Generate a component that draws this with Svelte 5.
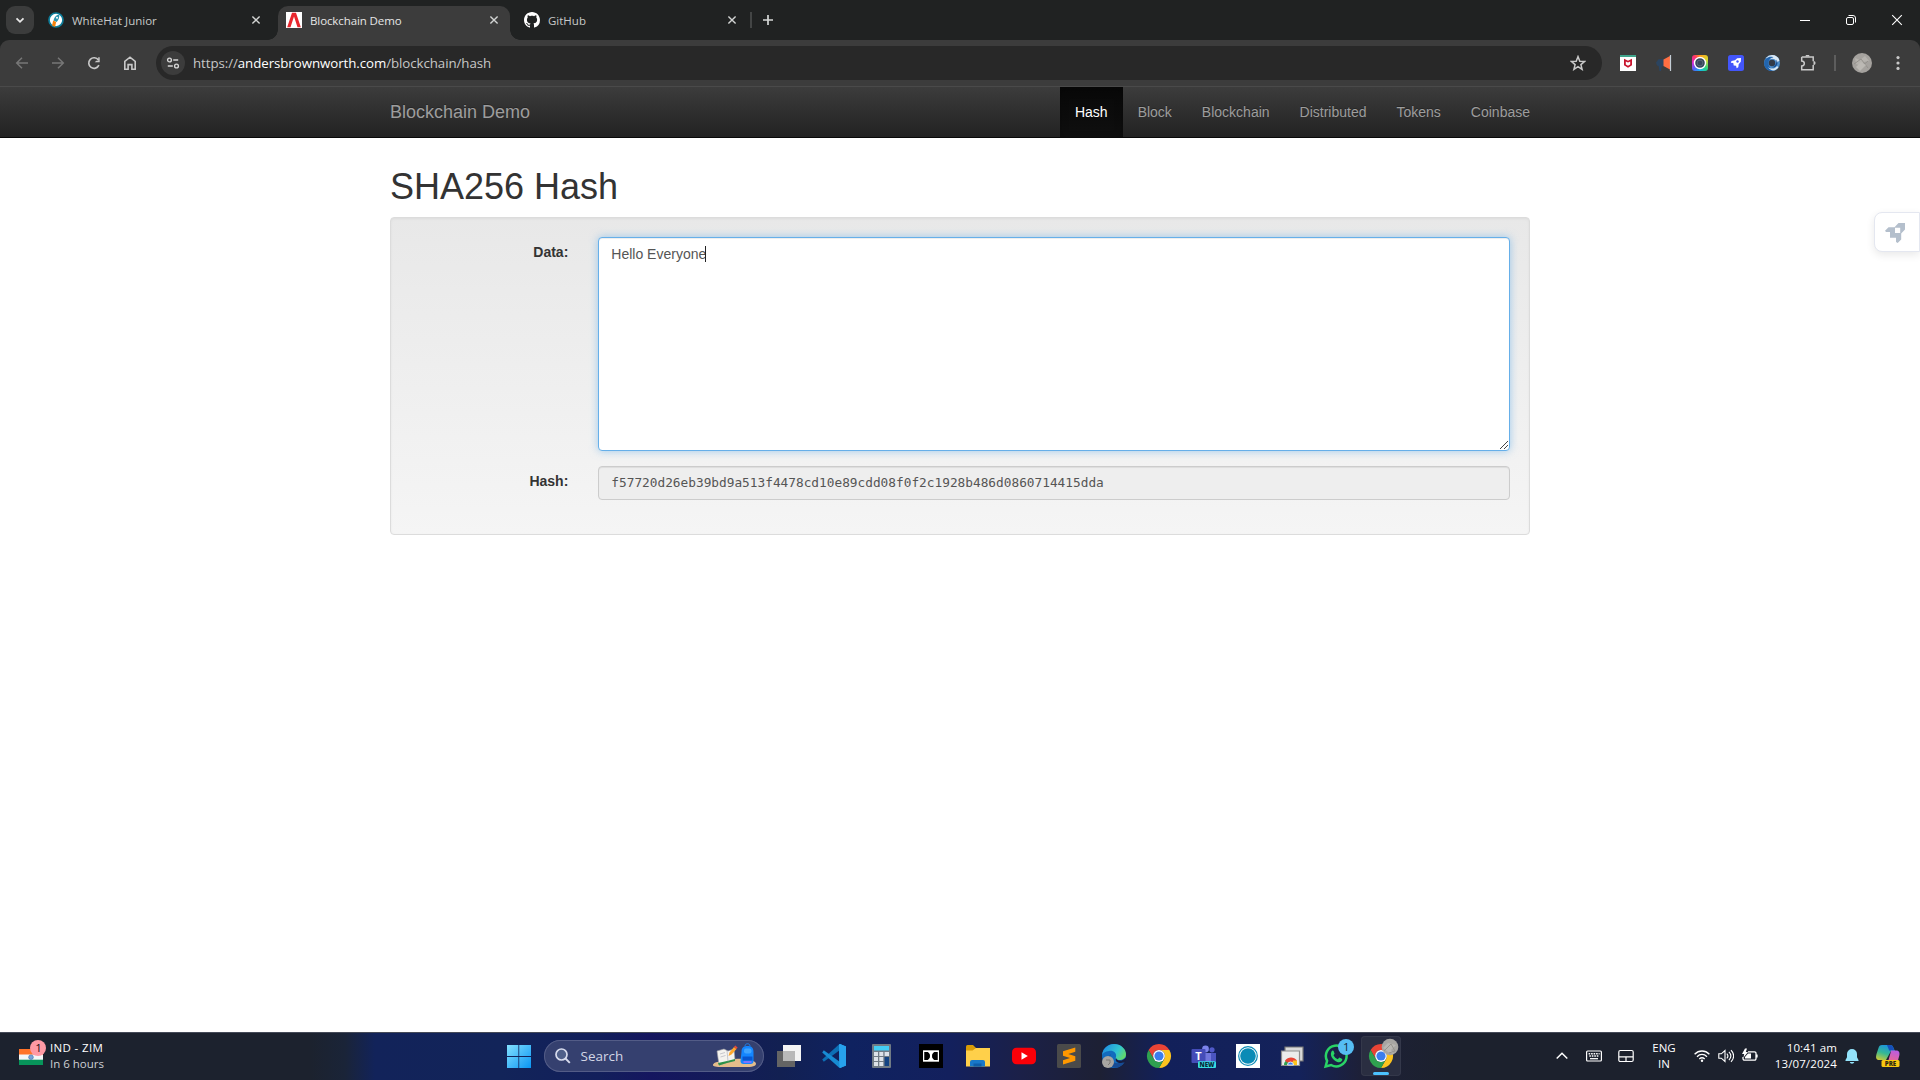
<script>
  let data = $state('Hello Everyone');
  const hash = 'f57720d26eb39bd9a513f4478cd10e89cdd08f0f2c1928b486d0860714415dda';
  const links = ['Hash', 'Block', 'Blockchain', 'Distributed', 'Tokens', 'Coinbase'];
</script>

{#snippet closeIcon()}
  <svg class="i16" viewBox="0 0 16 16"><path d="M4.4 4.4l7.2 7.2M11.6 4.4l-7.2 7.2" stroke="#d2d4d3" stroke-width="1.4" /></svg>
{/snippet}

{#snippet chromeLogo()}
  <path d="M5.6 10A12 12 0 0 1 26.4 10L16 10A6 6 0 0 0 10.8 19Z" fill="#e94435" />
  <path d="M26.4 10A12 12 0 0 1 16 28L21.2 19A6 6 0 0 0 16 10Z" fill="#fcc31e" />
  <path d="M16 28A12 12 0 0 1 5.6 10L10.8 19A6 6 0 0 0 21.2 19Z" fill="#2fa14f" />
  <circle cx="16" cy="16" r="5.9" fill="#fff" />
  <circle cx="16" cy="16" r="4.6" fill="#3b7ded" />
{/snippet}

<div class="screen">
  <header class="tabs">
    <button class="drop" aria-label="Search tabs"><svg class="i16" viewBox="0 0 16 16"><path d="M4.5 6.3L8 9.8l3.500-3.500" stroke="#e8e8e8" stroke-width="1.8" fill="none" /></svg></button>
    <div class="tab">
      <svg class="i16" viewBox="0 0 16 16"><circle cx="8" cy="8" r="7" fill="#fff" stroke="#0d7c99" stroke-width="1.700" /><path d="M11.300 2.500C7.500 3 6 6 5.600 8.600l3 1.400c1.800-1.700 3-4.400 2.700-7.500z" fill="#2b93ad" /><circle cx="9" cy="5.800" r="1" fill="#fff" /><path d="M5.200 8.600l3 1.500L7 15l-3-1.500z" fill="#f7820b" /></svg>
      <span class="title">WhiteHat Junior</span>{@render closeIcon()}
    </div>
    <div class="tab active">
      <svg class="i16" viewBox="0 0 16 16"><path fill="#fff" d="M0 0h16v16H0z" /><path d="M1.200 15.200L6 .7h4l4.800 14.500h-3.300L8 4.500 4.500 15.200z" fill="#e8262d" /></svg>
      <span class="title">Blockchain Demo</span>{@render closeIcon()}
    </div>
    <div class="tab">
      <svg class="i16" viewBox="0 0 16 16"><path fill="#fff" d="M8 0C3.580 0 0 3.580 0 8c0 3.540 2.290 6.530 5.470 7.590.4.070.55-.170.55-.380 0-.190-.010-.820-.010-1.490-2.010.370-2.530-.490-2.690-.940-.090-.230-.480-.940-.820-1.130-.280-.150-.680-.520-.010-.530.630-.010 1.080.580 1.230.820.720 1.210 1.870.870 2.330.660.070-.520.280-.870.510-1.070-1.780-.200-3.640-.890-3.640-3.950 0-.870.310-1.590.820-2.150-.080-.200-.360-1.020.080-2.120 0 0 .670-.210 2.200.820.640-.180 1.320-.270 2-.270s1.360.090 2 .270c1.530-1.040 2.200-.820 2.200-.820.440 1.100.160 1.920.080 2.120.510.560.820 1.270.820 2.150 0 3.070-1.870 3.750-3.650 3.950.290.250.540.730.540 1.480 0 1.070-.010 1.930-.010 2.200 0 .210.150.460.550.380A8.010 8.010 0 0 0 16 8c0-4.420-3.580-8-8-8z" /></svg>
      <span class="title">GitHub</span>{@render closeIcon()}
    </div>
    <i class="tabsep"></i>
    <svg class="i16 plus" viewBox="0 0 16 16"><path d="M8 3v10M3 8h10" stroke="#d5d7d6" stroke-width="1.700" /></svg>
    <div class="winbtns">
      <svg class="i16" viewBox="0 0 16 16"><path d="M3 8.500h10" stroke="#fff" /></svg>
      <svg class="i16" viewBox="0 0 16 16"><rect x="3.500" y="5.500" width="7" height="7" rx="1.500" stroke="#fff" fill="none" /><path d="M5.500 3.500h4.500a2.500 2.500 0 0 1 2.500 2.500v4.500" stroke="#fff" fill="none" /></svg>
      <svg class="i16" viewBox="0 0 16 16"><path d="M3.200 3.200l9.600 9.600M12.800 3.200l-9.600 9.600" stroke="#fff" stroke-width="1.100" /></svg>
    </div>
  </header>

  <div class="toolwrap">
    <div class="toolbar">
      <div class="nav-ic"><svg class="i16" viewBox="0 0 16 16"><path d="M14 8H3M8 2.700L2.700 8 8 13.300" stroke="#777" stroke-width="1.500" fill="none" /></svg></div>
      <div class="nav-ic"><svg class="i16" viewBox="0 0 16 16"><path d="M2 8h11M8 2.700L13.300 8 8 13.300" stroke="#777" stroke-width="1.500" fill="none" /></svg></div>
      <div class="nav-ic"><svg class="i16" viewBox="0 0 16 16"><path d="M12.900 10.200A5.300 5.300 0 1 1 12.400 5" stroke="#c9c9c9" stroke-width="1.600" fill="none" /><path d="M13.700 2.200v5H8.700l1.600-1.500h1.900V2.200z" fill="#c9c9c9" /></svg></div>
      <div class="nav-ic"><svg class="i16" viewBox="0 0 16 16"><path d="M2.800 14.200V6.300L8 2.200l5.200 4.100v7.900H9.900V9.600H6.100v4.600z" stroke="#c9c9c9" stroke-width="1.600" fill="none" /></svg></div>
      <div class="omni">
        <span class="site"><svg class="i16" viewBox="0 0 16 16"><path d="M8.200 5h5M2.800 11h5" stroke="#d6d6d6" stroke-width="1.700" /><circle cx="4.500" cy="5" r="1.900" stroke="#d6d6d6" stroke-width="1.400" fill="none" /><circle cx="11.500" cy="11" r="1.900" stroke="#d6d6d6" stroke-width="1.400" fill="none" /></svg></span>
        <span class="url">https://<b>andersbrownworth.com</b>/blockchain/hash</span>
        <svg class="i16" viewBox="0 0 16 16"><path d="M8 1.600l1.800 4.600 4.800.3-3.700 3.100 1.200 4.800L8 11.700l-4.100 2.700 1.200-4.800L1.400 6.500l4.800-.3z" stroke="#c9c9c9" stroke-width="1.500" fill="none" /></svg>
      </div>
      <div class="exts">
        <svg class="i16" viewBox="0 0 16 16"><path fill="#fff" d="M0 0h16v16H0z" /><path fill="#40a58c" d="M0 0h16v2H0z" /><path d="M4 3.800l4 2 4-2v6.400l-4 2.600-4-2.600zM5.800 6.500v3L8 10.800l2.200-1.300v-3L8 7.600z" fill="#c8142d" fill-rule="evenodd" /></svg>
        <svg class="i16" viewBox="0 0 16 16"><path d="M0 7.500L2.500 4.300 8 4v7.500l-2-.2L5 16H3.500L2.600 11 1 10.500z" fill="#2b4460" /><path d="M7.500 4.400L14 1v13.500l-6.500-3.400z" fill="#ff6e42" /><path d="M14.500 0v16" stroke="#c3cdd5" stroke-width="1.200" /></svg>
        <span class="rainbow"><svg class="i16" viewBox="0 0 16 16"><circle cx="8" cy="8" r="5.500" fill="#35475a" stroke="#fff" stroke-width="1.400" /><circle cx="8" cy="8" r="2.900" fill="none" stroke="#627082" stroke-width=".8" /></svg></span>
        <svg class="i16" viewBox="0 0 16 16"><rect width="16" height="16" rx="2.500" fill="#4356fb" /><path d="M13 3L9.200 3.300 7 5.200 3.500 5.900 2.800 7.700 5.300 8.100 5.700 10.500 8.100 10.800 8.600 13.300 10.300 12.200 10.700 9.200 12.800 6.800z" fill="#fff" /><circle cx="9.500" cy="6.500" r="1.200" fill="#4356fb" /></svg>
        <svg class="i16" viewBox="0 0 16 16"><circle cx="8" cy="8" r="8" fill="#4d8cc9" /><path d="M8 0a8 8 0 0 1 7.500 5.500L12.500 8A4.500 4.500 0 0 0 8 3.800L4 4.500 2 3A8 8 0 0 1 8 0z" fill="#dbe9f5" /><path d="M.1 8.500C1 3 4.500 1 9.500 2.200 6 3 4.300 5 4.500 8.700 4.600 12 7 14 10 15.600 4 17 .5 13.500.1 8.500z" fill="#2265ae" /><path d="M4 12c3 2.500 7 2 9-1l1.500 1.200C12 16 7 17 4 12z" fill="#dbe9f5" /><circle cx="8" cy="8" r="3.200" fill="#333a48" /><path d="M12.500 4.500C12.500 9 11 11 8 12.500c4.500.5 7-3.500 4.500-8z" fill="#1b4e91" /></svg>
        <svg class="i16" viewBox="0 0 16 16"><path d="M1.700 1.900h11.500v4.300M13.200 10v4.800H1.700v-3.900c3.500-.2 3.500-4.600 0-4.800V1.900" stroke="#c9c9c9" stroke-width="1.500" fill="none" /><path d="M5.500 1.500a2 2 0 0 1 4 0zM13.500 6v4.200a2.100 2.100 0 0 0 0-4.200z" fill="#c9c9c9" /></svg>
      </div>
      <i class="toolsep"></i>
      <svg class="avatar" viewBox="0 0 20 20"><circle cx="10" cy="10" r="10" fill="#a5a29e" /><path d="M3 5l5 2 5-4 4 5-5 1-3 4-5-2z" fill="#b6b3ae" /><path d="M2 11l7-5 7 9M8 15l8-7" stroke="#95928d" fill="none" /><path d="M4 14l5-5 5 3-6 6z" fill="#bcb9b4" /></svg>
      <svg class="i16" viewBox="0 0 16 16" fill="#c9c9c9"><circle cx="8" cy="2.600" r="1.600" /><circle cx="8" cy="8" r="1.600" /><circle cx="8" cy="13.400" r="1.600" /></svg>
    </div>
  </div>

  <nav class="navbar">
    <div class="container navrow">
      <span class="brand">Blockchain Demo</span>
      <div class="links">
        {#each links as link, i}<span class="link" class:current={i === 0}>{link}</span>{/each}
      </div>
    </div>
  </nav>

  <main class="container page">
    <h1>SHA256 Hash</h1>
    <div class="well">
      <div class="group">
        <span class="label">Data:</span>
        <div class="control area"><span>{data}</span><i class="caret"></i>
          <svg class="grip" viewBox="0 0 9 9"><path d="M1 9L9 1M5 9L9 5" stroke="#444" /></svg>
        </div>
      </div>
      <div class="group">
        <span class="label">Hash:</span>
        <div class="control readonly">{hash}</div>
      </div>
    </div>
  </main>

  <aside class="float">
    <svg class="rocket" viewBox="0 0 20 20"><path d="M20 0H13.500L9.500 4.200H3.500L0 7.700 1 9H5V14.800H11V19L12.700 20 16.200 16.500V10.500L20 6.500zM10 4.700h5.200V10H10z" fill="#b4bfcc" fill-rule="evenodd" /></svg>
  </aside>

  <footer class="taskbar">
    <div class="widget">
      <svg class="flag" viewBox="0 0 28 28"><path fill="#ff7328" d="M0 9h24v6H0z" /><path fill="#f3f5f7" d="M0 14.500h24v6H0z" /><path fill="#07945a" d="M0 19.700h24V25H0z" /><circle cx="12" cy="17.200" r="2.300" fill="#78a4d4" stroke="#4774b4" stroke-width=".7" /><circle cx="19" cy="8" r="8" fill="#ff99a4" /><text x="19.500" y="12" text-anchor="middle" font-size="11.500" fill="#201014">1</text></svg>
      <div class="match"><div class="teams">IND - ZIM</div><div class="dim">In 6 hours</div></div>
    </div>

    <svg class="i32 start" viewBox="0 0 32 32"><defs><linearGradient id="win" x1="4" y1="4" x2="28" y2="28" gradientUnits="userSpaceOnUse"><stop stop-color="#85e2ff" /><stop offset="1" stop-color="#0a95f3" /></linearGradient></defs><path d="M4 5h11.400v11H4zM16.200 5H28v11H16.200zM4 17h11.400v11H4zM16.200 17H28v11H16.200z" fill="url(#win)" /></svg>

    <div class="search">
      <svg class="mag" viewBox="0 0 18 18"><circle cx="7.500" cy="7.500" r="5.500" stroke="#d8dced" stroke-width="1.700" fill="#50608a" /><path d="M11.500 11.500l4.300 4.300" stroke="#d8dced" stroke-width="1.900" /></svg>
      <span>Search</span>
      <svg class="school" viewBox="0 0 46 26"><path d="M1 21.500C4 17 12 19 18 17s20-2 25 2c3 3-1 5-8 5H10c-5 0-10-.3-9-2.500z" fill="#e4bd8b" /><path d="M5 8l7-2 4 2 6-2 1 11-7 2-9 3z" fill="#f4f3ef" stroke="#9b9aa0" stroke-width=".6" /><path d="M6 20l9-2 8-2v2l-8 2-8 2.500z" fill="#2c9148" /><path d="M15 7.500l1 11M8 11l5-1.500M8.500 14l5-1.500M18 10l4-1.300" stroke="#a7a7b3" stroke-width=".6" /><path d="M16.500 13l1-3.500 4.500-5.500 2.500 2-5 5.500z" fill="#ffa72d" /><path d="M22 4l1.300-1.500 2.300 2L24.500 6z" fill="#e94a37" /><path d="M29.500 9c0-5 2.500-6 6-6s6 1 6 6v9c0 2-1 3-3 3h-7c-2 0-3-1-3-3z" fill="#1486ff" /><path d="M33 3c0-3 5-3 5 0" stroke="#2283ea" fill="none" /><rect x="32" y="5.500" width="7.500" height="5" rx="2" fill="#40a4ff" /><path d="M30.500 13.500h10v4h-10z" fill="#0756d0" /><path d="M31.500 19h8" stroke="#9c6cff" stroke-width="1.500" /></svg>
    </div>

    <div class="apps">
      <svg class="i32" viewBox="0 0 32 32"><path fill="#646464" d="M4 11h18v16H4z" /><path fill="#f4f4f4" d="M10 5h18v16H10z" /><path fill="#b9b9b9" d="M10 11h12v10H10z" /></svg>
      <svg class="i32" viewBox="0 0 32 32"><path d="M22 4l6 2.500v19L22 28 21 4.600z" fill="#26a5f2" /><path d="M21.500 4L4.200 19.500l1.600 2.200L22 10z" fill="#0d6fb5" /><path d="M21.500 28L4.200 12.500l1.600-2.200L22 22z" fill="#178bd3" /><path d="M21 4.500L22 4l6 2.500v19L22 28l-.8-.6z" fill="#27a2ed" /></svg>
      <svg class="i32" viewBox="0 0 32 32"><rect x="6" y="4" width="19" height="24" rx="1" fill="#707b85" /><path fill="#43cdf5" d="M8 6h15v4.500H8z" /><path fill="#dde3e9" d="M8 12h4v4H8zM13.300 12h4v4h-4zM18.600 12h4.400v4h-4.400zM8 17h4v4H8zM13.300 17h4v4h-4zM8 22h4v4H8zM13.300 22h4v4h-4z" /><path fill="#124383" d="M18.600 17H23v9h-4.400z" /></svg>
      <svg class="i32" viewBox="0 0 32 32"><path fill="#000" d="M4 4h24v24H4z" /><path fill="#fff" d="M8 10.300h16v11.400H8z" /><path fill="#000" d="M9.500 12h13v8h-13z" /><path fill="#fff" d="M10.600 12.400h.9v7.200h-.9zM20.500 12.400h.9v7.200h-.9zM12.500 12h7a4.600 4.600 0 0 0 0 8h-7a4.600 4.600 0 0 0 0-8z" /><path fill="#000" d="M9.500 12H12a4 4 0 0 1 2.800 4A4 4 0 0 1 12 20H9.500zM22.500 12H20a4 4 0 0 0-2.800 4 4 4 0 0 0 2.800 4h2.500z" /></svg>
      <svg class="i32" viewBox="0 0 32 32"><path d="M4 6.500Q4 5 5.500 5H11l3 3v5H4z" fill="#d89b06" /><path d="M4 10.500h6.500L14 8h14v18.500H4z" fill="#ffd04a" /><path d="M8 26.500V22q0-2 2-2h11q2 0 2 2v4.500z" fill="#1878c9" /><path d="M11.500 23.500h8v3h-8z" fill="#0e5da8" /></svg>
      <svg class="i32" viewBox="0 0 32 32"><rect x="4" y="7.800" width="24" height="16.400" rx="4.500" fill="#fa0008" /><path d="M13.500 12.300l6.300 3.700-6.300 3.700z" fill="#fff" /></svg>
      <svg class="i32" viewBox="0 0 32 32"><rect x="4" y="4" width="24" height="24" rx="1.500" fill="#4a4a4a" /><path d="M22.300 7.500L10 11.300v4.400l7 2.200-7 2.300v4.300l12.300-3.800v-4.400l-7-2.200 7-2.300z" fill="#ff9800" /></svg>
      <svg class="i32" viewBox="0 0 32 32"><defs><linearGradient id="edge" x1="8" y1="6" x2="27" y2="18" gradientUnits="userSpaceOnUse"><stop stop-color="#2295df" /><stop offset=".55" stop-color="#31c4d2" /><stop offset="1" stop-color="#6ade58" /></linearGradient></defs><circle cx="16" cy="16" r="12" fill="#126bbd" /><path d="M4 15C5 8 10 4 16 4c7 0 12 5 12 10 0 4-3 6-7 6-3 0-4-1-3-3 1-4-3-7-7-6-4 .5-6 2-7 4z" fill="url(#edge)" /><path d="M13 14c-3 5 2 10 8 9 3 0 4-1 6-2-4 8-12 8-16 4-2-3-1-9 2-11z" fill="#174b94" /><path d="M18 18c2 4 7 3 10-.5V22l-5 1c-4 0-6-2-5-5z" fill="#171d41" /><circle cx="10" cy="22" r="6" fill="#a7a5a2" /><path d="M8 20h4v3l-2 2" fill="none" stroke="#797673" /></svg>
      <svg class="i32" viewBox="0 0 32 32">{@render chromeLogo()}</svg>
      <svg class="i32" viewBox="0 0 32 32"><circle cx="17.500" cy="9" r="3.400" fill="#7b83eb" /><circle cx="24" cy="9.800" r="2.600" fill="#5059c9" /><path d="M20 13h8v8l-4 3h-4z" fill="#4a55c0" /><path d="M11 13h12v9c-3 5-9 5-12 1z" fill="#7177dc" /><rect x="3.500" y="9" width="14" height="14" rx="1" fill="#444cb8" /><text x="10.500" y="20" text-anchor="middle" font-size="11" font-weight="700" fill="#fff">T</text><rect x="10" y="21.300" width="18" height="6.700" rx="1" fill="#37dce1" /><text x="19" y="26.800" text-anchor="middle" font-size="6.200" font-weight="800" fill="#082838">NEW</text></svg>
      <svg class="i32" viewBox="0 0 32 32"><path fill="#fff" d="M4 4h24v24H4z" /><circle cx="16" cy="16" r="9.300" fill="none" stroke="#0b8bb6" stroke-width="1.200" /><circle cx="16" cy="16" r="7.800" fill="#0b8bb6" /></svg>
      <svg class="i32" viewBox="0 0 32 32"><path fill="#d9d9d9" stroke="#777" stroke-width="1.200" d="M9 7h18v14H9z" /><path fill="#ececec" stroke="#8e8e8e" stroke-width="1.200" d="M5.500 11h18v14.500h-18z" /><path d="M8 25a6.500 6.500 0 0 1 13 0z" fill="#2fa14f" /><path d="M9 20.500c3-4 9-4 12 0l-2 2h-8z" fill="#e94435" /><path d="M17 20.500h4V25h-5z" fill="#fcc31e" /><path d="M11.500 25a3 3 0 0 1 6 0z" fill="#3b7ded" stroke="#fff" stroke-width=".8" /></svg>
      <svg class="i32" viewBox="0 0 32 32"><path d="M5.600 26.500l1.500-5.600a10.400 10.400 0 1 1 4 4.100z" fill="none" stroke="#29d366" stroke-width="2.500" /><path d="M11.500 11.500c1-1.500 2-1 2.500.5l.6 1.700-1.100 1.600c1 2 2.300 3.200 4.300 4l1.500-1.700 3 1.500c.3 2.500-2.500 3.800-5 2.800-4-1.500-8-6-5.800-10.400z" fill="#29d366" /><circle cx="26" cy="7" r="8" fill="#56bdf3" /><text x="26.300" y="11.200" text-anchor="middle" font-size="11.500" fill="#12263a">1</text></svg>
      <div class="live">
        <svg class="i32" viewBox="0 0 32 32">{@render chromeLogo()}<circle cx="25" cy="7" r="8.300" fill="#a7a5a2" /><path d="M18 8l5-5 8 2-5 5 3 4-6-2z" fill="#b8b6b2" /><path d="M19 11l7-7 4 7-6 2" fill="none" stroke="#95928d" /></svg>
        <i class="run"></i>
      </div>
    </div>

    <div class="tray">
      <svg class="i16" viewBox="0 0 16 16"><path d="M2.700 10.500L8 5.300l5.300 5.200" stroke="#fff" stroke-width="1.500" fill="none" /></svg>
      <svg class="i16 kb" viewBox="0 0 16 16"><rect x=".6" y="3" width="14.800" height="10" rx="1" stroke="#fff" stroke-width="1.200" fill="none" /><path d="M2.600 5.700h11M3.300 8h10" stroke="#fff" stroke-width="1.400" stroke-dasharray="1.600 .9" /><path d="M4 10.700h8" stroke="#fff" stroke-width="1.300" /></svg>
      <svg class="i16 pad" viewBox="0 0 16 16"><rect x=".8" y="2.500" width="14.400" height="11" rx="1.500" stroke="#fff" stroke-width="1.200" fill="none" /><path d="M1 8.800h14M8 8.800v4.500" stroke="#fff" stroke-width="1.200" /></svg>
      <div class="lang"><div>ENG</div><div>IN</div></div>
      <svg class="i16 wifi" viewBox="0 0 16 16"><path d="M.6 6.200c4.300-4.300 10.500-4.300 14.800 0M3 8.700c3-3 7-3 10 0M5.300 11c1.700-1.600 3.700-1.600 5.400 0" stroke="#fff" stroke-width="1.300" fill="none" /><circle cx="8" cy="12.700" r="1.200" fill="#fff" /></svg>
      <svg class="i16 vol" viewBox="0 0 16 16"><path d="M.8 5.800h2.500L7 2.500v11l-3.700-3.300H.8z" stroke="#fff" stroke-width="1.100" fill="none" /><path d="M8.800 5.600c1.400 1.500 1.400 3.300 0 4.800M10.900 3.900c2.400 2.500 2.400 5.700 0 8.200M13 2.200c3.300 3.600 3.300 8 0 11.600" stroke="#fff" stroke-width="1.100" fill="none" /></svg>
      <svg class="i16 batt" viewBox="0 0 16 16"><path d="M6 3.800h6.500a1.500 1.500 0 0 1 1.500 1.500v5.400a1.500 1.500 0 0 1-1.500 1.500h-10A1.500 1.500 0 0 1 1 10.700V9M15 6.500v3" stroke="#fff" stroke-width="1.300" fill="none" /><path d="M3 .5L0 6h2.200L1.500 9.500 6 4H3.800L5 .5zM6 5.500h3v5H3V9z" fill="#fff" /></svg>
      <div class="clock"><div>10:41 am</div><div>13/07/2024</div></div>
      <svg class="i16 bell" viewBox="0 0 16 16"><path d="M8 1a5 5 0 0 0-5 5v3.200L1.500 12v1h13v-1L13 9.200V6a5 5 0 0 0-5-5zM5.700 14a2.400 2.400 0 0 0 4.600 0z" fill="#93e3fb" /></svg>
      <svg class="copilot" viewBox="0 0 26 26"><defs><linearGradient id="cl" x1="10" y1="0" x2="4" y2="19" gradientUnits="userSpaceOnUse"><stop stop-color="#178ce9" /><stop offset=".5" stop-color="#35b895" /><stop offset="1" stop-color="#f0cf21" /></linearGradient><linearGradient id="cr" x1="20" y1="6" x2="15" y2="22" gradientUnits="userSpaceOnUse"><stop stop-color="#b45bec" /><stop offset="1" stop-color="#fb6b79" /></linearGradient></defs><path d="M7 2h8c2 0 3 1 3.500 3L20 8h-4l-5 9H5c-4 0-4.500-2-3.500-6l2-6C4 3 5 2 7 2z" fill="url(#cl)" /><path d="M12 2h3c2 0 3 1 3.500 3l.7 2.500h-5z" fill="#164fb9" /><path d="M16 7.500h5c3 0 4 2 3.300 5L22 21H10c2.500 0 3-2 3.500-4l2-7z" fill="url(#cr)" /><rect x="6.500" y="17" width="18" height="7" rx="1.500" fill="#f8c811" /><text x="15.500" y="22.800" text-anchor="middle" font-size="6.200" font-weight="800" fill="#2c2712">PRE</text></svg>
    </div>
  </footer>
</div>

<style>
  :global(body) { background: #fff; overflow: hidden; }
  .screen { height: 1080px; display: flex; flex-direction: column; font-family: "Open Sans", "Noto Sans", sans-serif; position: relative; }
  .screen *, .screen { box-sizing: border-box; }
  svg { display: block; flex: none; }
  .i16 { width: 16px; height: 16px; }
  .i32 { width: 32px; height: 32px; overflow: visible; }

  .tabs { height: 40px; background: #202222; display: flex; align-items: flex-start; padding: 6px 0 0 6px; }
  .drop { width: 28px; height: 28px; border: 0; border-radius: 9px; background: #3b3c3c; display: grid; place-items: center; padding: 0; margin-right: 6px; }
  .tab { width: 232px; height: 34px; margin-right: 6px; padding: 0 8px 6px; display: flex; align-items: center; gap: 8px; color: #c7c9c8; font-size: 11.5px; position: relative; }
  .tab .title { flex: 1; white-space: nowrap; padding-top: 1px; letter-spacing: 0; }
  .active { background: #3c3c3c; color: #e6e6e6; border-radius: 10px 10px 0 0; }
  .tab.active .title { letter-spacing: -.1px; }
  .active::before, .active::after { content: ""; position: absolute; bottom: 0; width: 10px; height: 10px; }
  .active::before { left: -10px; background: radial-gradient(circle at 0 0, transparent 9.5px, #3c3c3c 10px); }
  .active::after { right: -10px; background: radial-gradient(circle at 100% 0, transparent 9.5px, #3c3c3c 10px); }
  .tabsep { width: 2px; height: 16px; background: #434545; margin: 6px 0 0 -4px; }
  .plus { margin: 6px 0 0 8px; }
  .winbtns { display: flex; margin-left: auto; padding-top: 6px; }
  .winbtns svg { margin: 0 15px; }

  .toolwrap { height: 47px; background: #202222; }
  .toolbar { height: 47px; background: #3c3c3c; border-radius: 9px 9px 0 0; border-bottom: 1px solid #4a4a4a; display: flex; align-items: center; padding: 0 14px 0 4px; }
  .nav-ic { width: 36px; display: grid; place-items: center; }
  .omni { width: 1446px; height: 34px; margin-left: 8px; border-radius: 17px; background: #282828; display: flex; align-items: center; padding: 0 16px 0 5px; }
  .site { width: 24px; height: 24px; border-radius: 50%; background: #3c3c3c; display: grid; place-items: center; margin-right: 8px; }
  .url { flex: 1; font-size: 13.3px; color: #c7c7c7; letter-spacing: -.07px; white-space: nowrap; }
  .url b { font-weight: 400; color: #fff; }
  .exts { display: flex; gap: 20px; margin-left: 18px; }
  .rainbow { width: 16px; height: 16px; border-radius: 3px; background: conic-gradient(#ff9c1a, #d5dd2f, #21d38b 135deg, #15b5f0 180deg, #5162f5 225deg, #d728d8 270deg, #ff3467 320deg, #ff9c1a); }
  .toolsep { width: 2px; height: 16px; background: #5d5d5d; margin: 0 16px 0 18px; }
  .avatar { width: 20px; height: 20px; margin-right: 18px; }

  .navbar { height: 51px; background: linear-gradient(#3c3c3c, #222); border-bottom: 1px solid #080808; font-family: "Liberation Sans", Arial, sans-serif; }
  .container { width: 1140px; margin: 0 auto; }
  .navrow { display: flex; justify-content: space-between; }
  .brand { font-size: 18px; line-height: 50px; color: #9d9d9d; text-shadow: 0 -1px 0 rgba(0, 0, 0, .25); }
  .links { display: flex; }
  .link { padding: 0 15px; font-size: 14px; line-height: 50px; color: #9d9d9d; text-shadow: 0 -1px 0 rgba(0, 0, 0, .25); }
  .link:last-child { padding-right: 0; }
  .current { color: #fff; background: linear-gradient(#080808, #0f0f0f); box-shadow: inset 0 3px 9px rgba(0, 0, 0, .25); }

  .page { flex: 1; font: 14px/20px "Liberation Sans", Arial, sans-serif; color: #333; }
  h1 { margin: 29px 0 10px; font-size: 36px; font-weight: 400; line-height: 40px; }
  .well { height: 318px; padding: 19px 19px; border: 1px solid #dcdcdc; border-radius: 4px; background: linear-gradient(#e8e8e8, #f5f5f5); box-shadow: inset 0 1px 3px rgba(0, 0, 0, .05), 0 1px 0 rgba(255, 255, 255, .1); }
  .group { display: grid; grid-template-columns: 158.300px 1fr; column-gap: 30px; margin-bottom: 15px; }
  .label { text-align: right; font-weight: 700; padding-top: 5px; }
  .control { border: 1px solid #ccc; border-radius: 4px; padding: 6px 12px; color: #555; background: #fff; box-shadow: inset 0 1px 1px rgba(0, 0, 0, .075); }
  .area { height: 214px; border-color: #66afe9; box-shadow: inset 0 1px 1px rgba(0, 0, 0, .075), 0 0 8px rgba(102, 175, 233, .6); position: relative; display: flex; }
  .caret { width: 1px; height: 16px; margin: 2px 0 0 -1px; background: #222; }
  .grip { position: absolute; right: 1px; bottom: 1px; width: 9px; height: 9px; }
  .readonly { height: 34px; background: #eee; font: 12.790px/20px "DejaVu Sans Mono", monospace; }

  .float { position: absolute; right: 0; top: 212px; width: 46px; height: 40px; border: 1px solid #e4e7f0; border-radius: 8px 0 0 8px; background: #fff; box-shadow: 0 3px 8px rgba(0, 0, 0, .09); display: flex; align-items: center; padding: 1px 0 0 10px; }
  .rocket { width: 20px; height: 20px; }

  .taskbar { height: 48px; display: flex; align-items: center; color: #fff; font-size: 11.500px; line-height: 16px; box-shadow: inset 0 1px #454a58; background: linear-gradient(90deg, #1c222e 0, #1c222e 310px, #1a2438 345px, #12235a 375px, #122459 500px, #121f5b 600px, #15165f 650px, #122052 780px, #0f2260 850px, #13205d 950px, #1b2048 1020px, #1d2034 1100px, #12205a 1165px, #14225a 1300px, #1d2038 1360px, #1c212d 1450px); }
  .widget { width: 503px; display: flex; padding-left: 19px; }
  .flag { width: 28px; height: 28px; margin-top: 0; }
  .match { margin-left: 3px; white-space: nowrap; }
  .teams { letter-spacing: .35px; }
  .dim { color: #cdd0d4; }
  .search { width: 220px; height: 32px; margin-left: 9px; border-radius: 16px; background: #35406f; box-shadow: inset 0 0 0 1px #535c87; display: flex; align-items: center; padding: 0 6px 0 10px; color: #d3d6e6; font-size: 13.500px; }
  .search span { flex: 1; padding-left: 8.500px; }
  .mag { width: 18px; height: 18px; }
  .school { width: 46px; height: 26px; }
  .apps { display: grid; grid-template-columns: 45px 45px 51px 47px 47px 45px 45px 45px 45px 45px 43px 45px 43px 45px; justify-items: center; align-items: center; margin-left: 2.500px; }
  .live { position: relative; width: 40px; height: 40px; border-radius: 4px; background: #2a2e41; box-shadow: inset 0 0 0 1px #34384a; display: grid; place-items: center; left: 1px; }
  .run { position: absolute; left: 12px; bottom: 1px; width: 16px; height: 3px; border-radius: 2px; background: #4cc2ff; }
  .tray { flex: 1; display: flex; align-items: center; padding-left: 151.500px; }
  .kb { margin-left: 16px; }
  .pad { margin-left: 15.500px; }
  .lang { width: 28px; margin-left: 16.500px; text-align: center; }
  .wifi { margin-left: 16px; }
  .vol { margin-left: 8px; }
  .batt { margin-left: 8px; }
  .clock { width: 79px; text-align: right; white-space: nowrap; letter-spacing: .12px; }
  .bell { margin-left: 7px; }
  .copilot { width: 26px; height: 26px; margin-left: 15px; }
</style>
